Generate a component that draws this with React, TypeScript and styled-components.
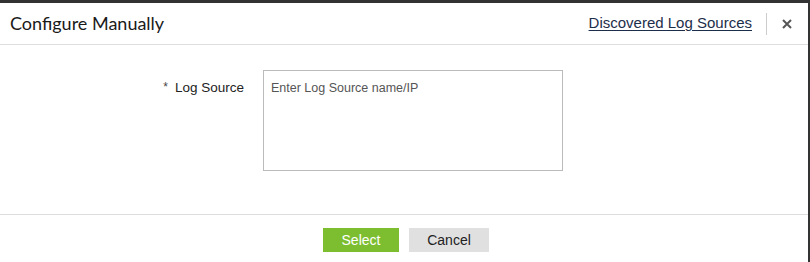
import React from "react";
import styled, { createGlobalStyle } from "styled-components";

const Global = createGlobalStyle`
  html, body { margin: 0; padding: 0; background: #fff; }
  body { font-family: "Liberation Sans", Arial, sans-serif; }
  * { box-sizing: border-box; }
`;

const Dialog = styled.div`
  width: 810px;
  height: 262px;
  border-top: 3px solid #333;
  border-right: 2px solid #333;
  display: flex;
  flex-direction: column;
  background: #fff;
`;

const Header = styled.div`
  height: 42px;
  border-bottom: 1px solid #dddddd;
  display: flex;
  align-items: center;
  padding: 0 0 0 10px;
`;

const Title = styled.h1`
  margin: 0;
  flex: 1;
  font-family: Lato, "Liberation Sans", sans-serif;
  font-weight: 400;
  font-size: 18px;
  color: #1a1a1a;
  padding-bottom: 2px;
`;

const HeaderLink = styled.a`
  font-size: 15px;
  color: #1c2e4a;
  text-decoration: underline;
  text-underline-offset: 2px;
  cursor: pointer;
  padding-bottom: 2px;
`;

const VDivider = styled.span`
  width: 1px;
  height: 22px;
  background: #cccccc;
  margin: 0 0 0 14px;
`;

const CloseButton = styled.button`
  border: none;
  background: none;
  padding: 0;
  margin: 0 16px 0 15px;
  width: 10px;
  height: 10px;
  display: flex;
  align-items: center;
  justify-content: center;
  cursor: pointer;
`;

const Body = styled.div`
  flex: 1;
  border-bottom: 1px solid #dddddd;
  padding: 25px 0 0 144px;
`;

const FormRow = styled.div`
  display: flex;
  align-items: flex-start;
`;

const Label = styled.label`
  width: 100px;
  text-align: right;
  font-size: 13.5px;
  color: #222;
  padding-top: 10px;
  margin-right: 19px;
`;

const Star = styled.span`
  font-size: 12px;
  color: #444;
  margin-right: 7px;
  vertical-align: 1px;
`;

const TextArea = styled.textarea`
  width: 300px;
  height: 101px;
  border: 1px solid #bbbbbb;
  padding: 10px 7px;
  font-family: "Liberation Sans", Arial, sans-serif;
  font-size: 12.5px;
  color: #333;
  resize: none;
  outline: none;
  &::placeholder { color: #555; }
`;

const Footer = styled.div`
  height: 47px;
  display: flex;
  justify-content: center;
  align-items: flex-start;
  gap: 10px;
  padding: 13px 0 0 4px;
`;

const Button = styled.button<{ $primary?: boolean; $w: number }>`
  width: ${(p) => p.$w}px;
  height: 24px;
  border: none;
  font-family: "Liberation Sans", Arial, sans-serif;
  font-size: 14px;
  background: ${(p) => (p.$primary ? "#7dbe31" : "#e0e0e0")};
  color: ${(p) => (p.$primary ? "#fff" : "#222")};
  cursor: pointer;
  padding: 0;
`;

export default function App() {
  return (
    <>
      <Global />
      <Dialog>
        <Header>
          <Title>Configure Manually</Title>
          <HeaderLink>Discovered Log Sources</HeaderLink>
          <VDivider />
          <CloseButton aria-label="Close">
            <svg width="10" height="10" viewBox="0 0 10 10">
              <path d="M1 1 L9 9 M9 1 L1 9" stroke="#555" strokeWidth="2" />
            </svg>
          </CloseButton>
        </Header>
        <Body>
          <FormRow>
            <Label>
              <Star>*</Star>Log Source
            </Label>
            <TextArea placeholder="Enter Log Source name/IP" />
          </FormRow>
        </Body>
        <Footer>
          <Button $primary $w={76}>Select</Button>
          <Button $w={80}>Cancel</Button>
        </Footer>
      </Dialog>
    </>
  );
}
